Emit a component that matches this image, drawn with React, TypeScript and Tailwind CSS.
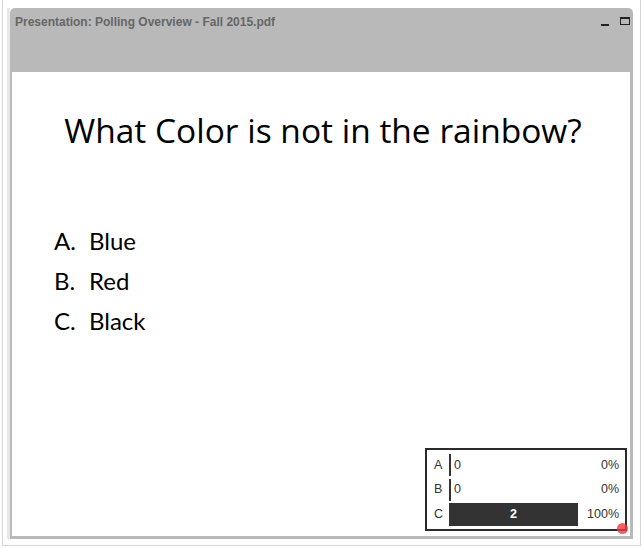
import React from "react";

const answers = [
  { key: "A", text: "Blue" },
  { key: "B", text: "Red" },
  { key: "C", text: "Black" },
];

const results = [
  { key: "A", count: 0, pct: 0 },
  { key: "B", count: 0, pct: 0 },
  { key: "C", count: 2, pct: 100 },
];

const PollResults: React.FC = () => (
  <div className="absolute left-[413px] top-[376px] w-[202px] h-[83px] border-2 border-[#2b2b2b] bg-white px-[6px] py-[3px] flex flex-col justify-between font-['Liberation_Sans',Arial,sans-serif] text-[12.5px] text-[#333]">
    {results.map((r) => (
      <div key={r.key} className="flex items-center h-[24px]">
        <span className="w-[16px] pl-[1px]">{r.key}</span>
        <div className="w-[129px] h-[23px] flex items-center">
          {r.count > 0 ? (
            <div
              className="h-full bg-[#333] text-white font-bold flex items-center justify-center"
              style={{ width: `${r.pct}%` }}
            >
              {r.count}
            </div>
          ) : (
            <>
              <div className="w-[2px] h-[22px] bg-[#333]" />
              <span className="pl-[3px]">{r.count}</span>
            </>
          )}
        </div>
        <span className="flex-1 text-right">{r.pct}%</span>
      </div>
    ))}
    <div className="absolute -right-[3px] -bottom-[5px] w-[11px] h-[11px] rounded-full bg-[#ee3b3b]/80" />
  </div>
);

const App: React.FC = () => {
  return (
    <div className="w-[642px] h-[548px] bg-white overflow-hidden">
      <div className="ml-[2px] w-[639px] h-[546px] border-l border-r border-b border-[#d6d6d6] pt-[8px] pl-[4px]">
        <div className="border-l-[3px] border-[#e8e8e8] w-[626px]">
          <div className="w-[623px] h-[531px] bg-[#b9b9b9] rounded-t-[5px] flex flex-col">
            <div className="h-[64px] flex justify-between pl-[5px] pr-[3px] pt-[7px]">
              <span className="font-['Liberation_Sans',Arial,sans-serif] font-bold text-[12px] leading-[14px] text-[#666]">
                Presentation: Polling Overview - Fall 2015.pdf
              </span>
              <div className="flex items-start gap-[11px] pt-[2px]">
                <div className="w-[8px] h-[2px] bg-[#222] mt-[7px]" />
                <div className="w-[10px] h-[8px] border border-t-2 border-[#222]" />
              </div>
            </div>
            <div className="flex-1 ml-[2px] mr-[3px] mb-[3px] bg-white relative font-['Lato','Open_Sans',sans-serif] text-black">
              <h1 className="text-center font-['Open_Sans',sans-serif] text-[33.5px] leading-[40px] pt-[38px] pl-[4px]">
                What Color is not in the rainbow?
              </h1>
              <ol className="mt-[71px] pl-[42px] text-[24px] leading-[40px]">
                {answers.map((a) => (
                  <li key={a.key} className="flex">
                    <span className="w-[35px]">{a.key}.</span>
                    <span>{a.text}</span>
                  </li>
                ))}
              </ol>
              <PollResults />
            </div>
          </div>
        </div>
      </div>
    </div>
  );
};

export default App;
